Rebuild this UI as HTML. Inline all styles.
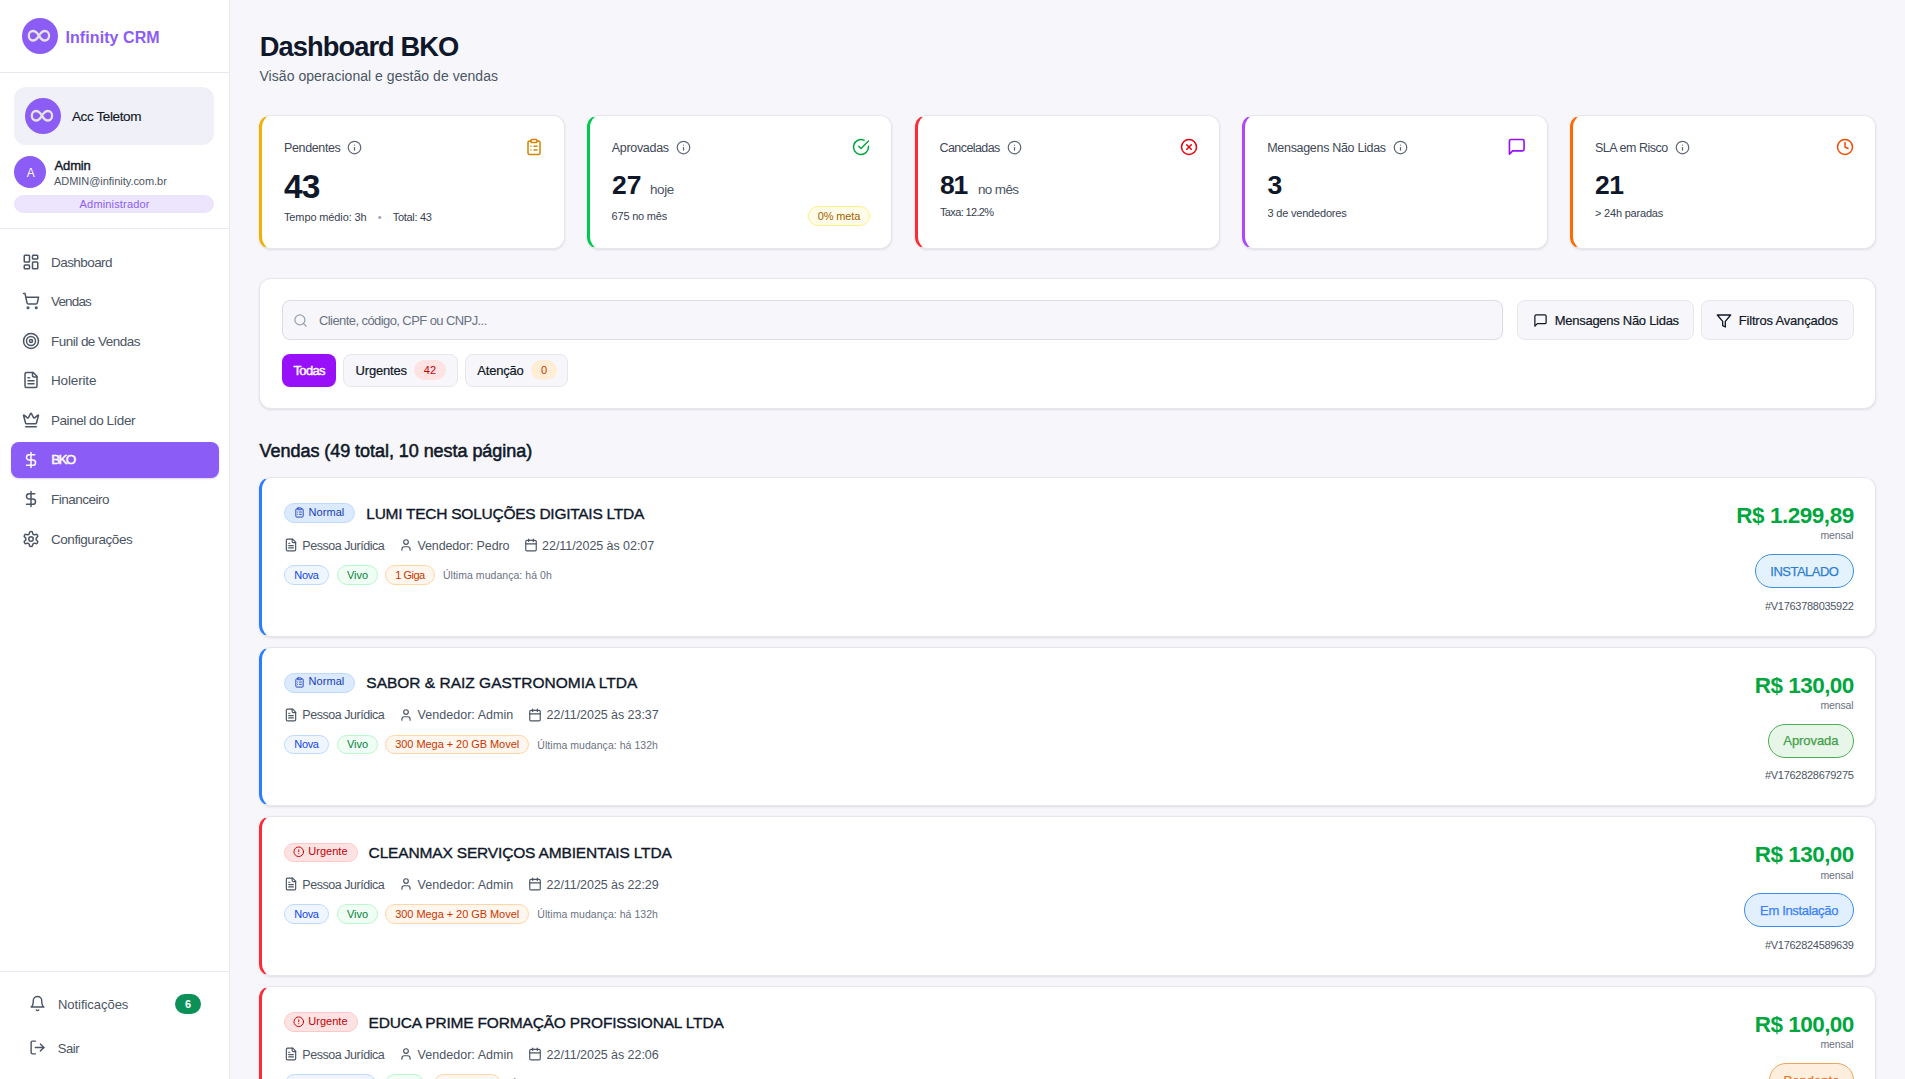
<!DOCTYPE html>
<html lang="pt-BR">
<head>
<meta charset="utf-8">
<title>Dashboard BKO - Infinity CRM</title>
<style>
*{box-sizing:border-box;margin:0;padding:0}
html,body{width:1905px;height:1079px;overflow:hidden}
body{font-family:"Liberation Sans",sans-serif;background:#f7f7fb;color:#111827;position:relative}
.a{position:absolute}
.t{white-space:pre}
svg.a{display:block;overflow:visible}
</style>
</head>
<body>
<div class="a" style="left:0px;top:0px;width:229px;height:1079px;background:#fff"></div>
<div class="a" style="left:229px;top:0px;width:1px;height:1079px;background:#e8e8f0"></div>
<div class="a" style="left:0px;top:72px;width:229px;height:1px;background:#e8e8f0"></div>
<div class="a" style="left:0px;top:228px;width:229px;height:1px;background:#e8e8f0"></div>
<div class="a" style="left:0px;top:971px;width:229px;height:1px;background:#e8e8f0"></div>
<div class="a" style="left:22px;top:18px;width:36px;height:36px;border-radius:50%;background:#8b5cf6"></div>
<svg class="a" style="left:27.35px;top:29.49px" width="23.9" height="13.62" viewBox="0 0 40 20" preserveAspectRatio="none"><path d="M20 10 C16 4 13 3 10 3 C6 3 3 6 3 10 C3 14 6 17 10 17 C13 17 16 16 20 10 C24 4 27 3 30 3 C34 3 37 6 37 10 C37 14 34 17 30 17 C27 17 24 16 20 10 Z" fill="none" stroke="#e6e4dc" stroke-width="3.8"/></svg>
<div class="a t" style="top:29.66px;font-size:16px;line-height:16px;color:#8b5cf6;font-weight:700;left:65.5px;letter-spacing:0.073px;">Infinity CRM</div>
<div class="a" style="left:14px;top:87px;width:200px;height:58px;border-radius:12px;background:#f0f0f8"></div>
<div class="a" style="left:25px;top:98px;width:36px;height:36px;border-radius:50%;background:#8b5cf6"></div>
<svg class="a" style="left:30.35px;top:109.49px" width="23.9" height="13.62" viewBox="0 0 40 20" preserveAspectRatio="none"><path d="M20 10 C16 4 13 3 10 3 C6 3 3 6 3 10 C3 14 6 17 10 17 C13 17 16 16 20 10 C24 4 27 3 30 3 C34 3 37 6 37 10 C37 14 34 17 30 17 C27 17 24 16 20 10 Z" fill="none" stroke="#e6e4dc" stroke-width="3.8"/></svg>
<div class="a t" style="top:109.87px;font-size:13.5px;line-height:13.5px;color:#111827;left:72px;-webkit-text-stroke:0.15px #111827;letter-spacing:-0.389px;">Acc Teletom</div>
<div class="a" style="left:14px;top:156px;width:32px;height:32px;border-radius:50%;background:#8b5cf6"></div>
<div class="a t" style="top:166.64px;font-size:12px;line-height:12px;color:#fff;left:-269.2px;width:600px;text-align:center;">A</div>
<div class="a t" style="top:159.30px;font-size:13px;line-height:13px;color:#111827;left:54.5px;-webkit-text-stroke:0.4px #111827;letter-spacing:-0.132px;">Admin</div>
<div class="a t" style="top:175.69px;font-size:11px;line-height:11px;color:#4b5563;left:54px;letter-spacing:-0.041px;">ADMIN@infinity.com.br</div>
<div class="a" style="left:14px;top:195px;width:200px;height:18px;border-radius:9px;background:#ede5fd"></div>
<div class="a t" style="top:198.69px;font-size:11px;line-height:11px;color:#8b5cf6;left:-185.4px;width:600px;text-align:center;letter-spacing:0.165px;">Administrador</div>
<svg class="a" style="left:22.00px;top:253.10px;" width="18" height="18" viewBox="0 0 24 24" fill="none" stroke="#4b5563" stroke-width="2" stroke-linecap="round" stroke-linejoin="round"><rect width="7" height="9" x="3" y="3" rx="1"/><rect width="7" height="5" x="14" y="3" rx="1"/><rect width="7" height="9" x="14" y="12" rx="1"/><rect width="7" height="5" x="3" y="16" rx="1"/></svg>
<div class="a t" style="top:255.87px;font-size:13.5px;line-height:13.5px;color:#4b5563;left:51px;letter-spacing:-0.561px;">Dashboard</div>
<svg class="a" style="left:22.00px;top:292.20px;" width="18" height="18" viewBox="0 0 24 24" fill="none" stroke="#4b5563" stroke-width="2" stroke-linecap="round" stroke-linejoin="round"><circle cx="8" cy="21" r="1"/><circle cx="19" cy="21" r="1"/><path d="M2.05 2.05h2l2.66 12.42a2 2 0 0 0 2 1.58h9.78a2 2 0 0 0 1.95-1.57l1.65-7.43H5.12"/></svg>
<div class="a t" style="top:294.97px;font-size:13.5px;line-height:13.5px;color:#4b5563;left:51px;letter-spacing:-0.841px;">Vendas</div>
<svg class="a" style="left:22.00px;top:332.00px;" width="18" height="18" viewBox="0 0 24 24" fill="none" stroke="#4b5563" stroke-width="2" stroke-linecap="round" stroke-linejoin="round"><circle cx="12" cy="12" r="10"/><circle cx="12" cy="12" r="6"/><circle cx="12" cy="12" r="2"/></svg>
<div class="a t" style="top:334.77px;font-size:13.5px;line-height:13.5px;color:#4b5563;left:51px;letter-spacing:-0.522px;">Funil de Vendas</div>
<svg class="a" style="left:22.00px;top:371.10px;" width="18" height="18" viewBox="0 0 24 24" fill="none" stroke="#4b5563" stroke-width="2" stroke-linecap="round" stroke-linejoin="round"><path d="M15 2H6a2 2 0 0 0-2 2v16a2 2 0 0 0 2 2h12a2 2 0 0 0 2-2V7Z"/><path d="M14 2v4a2 2 0 0 0 2 2h4"/><path d="M10 9H8"/><path d="M16 13H8"/><path d="M16 17H8"/></svg>
<div class="a t" style="top:373.87px;font-size:13.5px;line-height:13.5px;color:#4b5563;left:51px;letter-spacing:-0.154px;">Holerite</div>
<svg class="a" style="left:22.00px;top:410.80px;" width="18" height="18" viewBox="0 0 24 24" fill="none" stroke="#4b5563" stroke-width="2" stroke-linecap="round" stroke-linejoin="round"><path d="M11.562 3.266a.5.5 0 0 1 .876 0L15.39 8.87a1 1 0 0 0 1.516.294L21.183 5.5a.5.5 0 0 1 .798.519l-2.834 10.246a1 1 0 0 1-.956.734H5.81a1 1 0 0 1-.957-.734L2.02 6.02a.5.5 0 0 1 .798-.519l4.276 3.664a1 1 0 0 0 1.516-.294z"/><path d="M5 21h14"/></svg>
<div class="a t" style="top:413.57px;font-size:13.5px;line-height:13.5px;color:#4b5563;left:51px;letter-spacing:-0.455px;">Painel do Líder</div>
<div class="a" style="left:11px;top:442px;width:208px;height:35.6px;border-radius:8px;background:#8b5cf6;box-shadow:0 1px 2px rgba(139,92,246,.3)"></div>
<svg class="a" style="left:22.00px;top:450.60px;" width="18" height="18" viewBox="0 0 24 24" fill="none" stroke="#fff" stroke-width="2" stroke-linecap="round" stroke-linejoin="round"><line x1="12" x2="12" y1="2" y2="22"/><path d="M17 5H9.5a3.5 3.5 0 0 0 0 7h5a3.5 3.5 0 0 1 0 7H6"/></svg>
<div class="a t" style="top:453.37px;font-size:13.5px;line-height:13.5px;color:#fff;left:51.2px;-webkit-text-stroke:0.45px #fff;letter-spacing:-1.739px;">BKO</div>
<svg class="a" style="left:22.00px;top:490.00px;" width="18" height="18" viewBox="0 0 24 24" fill="none" stroke="#4b5563" stroke-width="2" stroke-linecap="round" stroke-linejoin="round"><line x1="12" x2="12" y1="2" y2="22"/><path d="M17 5H9.5a3.5 3.5 0 0 0 0 7h5a3.5 3.5 0 0 1 0 7H6"/></svg>
<div class="a t" style="top:492.77px;font-size:13.5px;line-height:13.5px;color:#4b5563;left:51px;letter-spacing:-0.503px;">Financeiro</div>
<svg class="a" style="left:22.00px;top:529.80px;" width="18" height="18" viewBox="0 0 24 24" fill="none" stroke="#4b5563" stroke-width="2" stroke-linecap="round" stroke-linejoin="round"><path d="M12.22 2h-.44a2 2 0 0 0-2 2v.18a2 2 0 0 1-1 1.73l-.43.25a2 2 0 0 1-2 0l-.15-.08a2 2 0 0 0-2.73.73l-.22.38a2 2 0 0 0 .73 2.73l.15.1a2 2 0 0 1 1 1.72v.51a2 2 0 0 1-1 1.74l-.15.09a2 2 0 0 0-.73 2.73l.22.38a2 2 0 0 0 2.73.73l.15-.08a2 2 0 0 1 2 0l.43.25a2 2 0 0 1 1 1.73V20a2 2 0 0 0 2 2h.44a2 2 0 0 0 2-2v-.18a2 2 0 0 1 1-1.73l.43-.25a2 2 0 0 1 2 0l.15.08a2 2 0 0 0 2.73-.73l.22-.39a2 2 0 0 0-.73-2.73l-.15-.08a2 2 0 0 1-1-1.74v-.5a2 2 0 0 1 1-1.74l.15-.09a2 2 0 0 0 .73-2.73l-.22-.38a2 2 0 0 0-2.73-.73l-.15.08a2 2 0 0 1-2 0l-.43-.25a2 2 0 0 1-1-1.73V4a2 2 0 0 0-2-2z"/><circle cx="12" cy="12" r="3"/></svg>
<div class="a t" style="top:532.57px;font-size:13.5px;line-height:13.5px;color:#4b5563;left:51px;letter-spacing:-0.443px;">Configurações</div>
<svg class="a" style="left:29.30px;top:995.40px;" width="17" height="17" viewBox="0 0 24 24" fill="none" stroke="#4b5563" stroke-width="2" stroke-linecap="round" stroke-linejoin="round"><path d="M6 8a6 6 0 0 1 12 0c0 7 3 9 3 9H3s3-2 3-9"/><path d="M10.3 21a1.94 1.94 0 0 0 3.4 0"/></svg>
<div class="a t" style="top:997.60px;font-size:13px;line-height:13px;color:#4b5563;left:58px;letter-spacing:-0.043px;">Notificações</div>
<div class="a" style="left:175px;top:994px;width:26px;height:20px;border-radius:10px;background:#0b9157"></div>
<div class="a t" style="top:998.89px;font-size:11px;line-height:11px;color:#fff;font-weight:700;left:-112px;width:600px;text-align:center;">6</div>
<svg class="a" style="left:29.40px;top:1039.10px;" width="17" height="17" viewBox="0 0 24 24" fill="none" stroke="#4b5563" stroke-width="2" stroke-linecap="round" stroke-linejoin="round"><path d="M9 21H5a2 2 0 0 1-2-2V5a2 2 0 0 1 2-2h4"/><polyline points="16 17 21 12 16 7"/><line x1="21" x2="9" y1="12" y2="12"/></svg>
<div class="a t" style="top:1042.00px;font-size:13px;line-height:13px;color:#4b5563;left:57.7px;letter-spacing:-0.431px;">Sair</div>
<div class="a t" style="top:32.99px;font-size:27.3px;line-height:27.3px;color:#0f172a;font-weight:700;left:259.8px;letter-spacing:-0.948px;">Dashboard BKO</div>
<div class="a t" style="top:68.95px;font-size:14px;line-height:14px;color:#4b5563;left:259.5px;letter-spacing:0.038px;">Visão operacional e gestão de vendas</div>
<div class="a" style="left:259.0px;top:115px;width:305.5px;height:134px;background:#fff;border:1px solid #e6e7ec;border-radius:12px;box-shadow:0 1px 3px rgba(15,23,42,.08),0 1px 2px rgba(15,23,42,.04);border-left:3px solid #f0b100;"></div>
<div class="a t" style="top:141.72px;font-size:12.5px;line-height:12.5px;color:#404856;left:284.0px;letter-spacing:-0.365px;">Pendentes</div>
<svg class="a" style="left:346.80px;top:139.90px;" width="15" height="15" viewBox="0 0 24 24" fill="none" stroke="#5f6775" stroke-width="2" stroke-linecap="round" stroke-linejoin="round"><circle cx="12" cy="12" r="10"/><path d="M12 16v-4"/><path d="M12 8h.01"/></svg>
<svg class="a" style="left:525.20px;top:138.00px;" width="18" height="18" viewBox="0 0 24 24" fill="none" stroke="#d08700" stroke-width="2" stroke-linecap="round" stroke-linejoin="round"><rect width="8" height="4" x="8" y="2" rx="1" ry="1"/><path d="M16 4h2a2 2 0 0 1 2 2v14a2 2 0 0 1-2 2H6a2 2 0 0 1-2-2V6a2 2 0 0 1 2-2h2"/><path d="M12 11h4"/><path d="M12 16h4"/><path d="M8 11h.01"/><path d="M8 16h.01"/></svg>
<div class="a" style="left:586.75px;top:115px;width:305.5px;height:134px;background:#fff;border:1px solid #e6e7ec;border-radius:12px;box-shadow:0 1px 3px rgba(15,23,42,.08),0 1px 2px rgba(15,23,42,.04);border-left:3px solid #00c950;"></div>
<div class="a t" style="top:141.72px;font-size:12.5px;line-height:12.5px;color:#404856;left:611.75px;letter-spacing:-0.307px;">Aprovadas</div>
<svg class="a" style="left:675.70px;top:139.90px;" width="15" height="15" viewBox="0 0 24 24" fill="none" stroke="#5f6775" stroke-width="2" stroke-linecap="round" stroke-linejoin="round"><circle cx="12" cy="12" r="10"/><path d="M12 16v-4"/><path d="M12 8h.01"/></svg>
<svg class="a" style="left:852.00px;top:138.00px;" width="18" height="18" viewBox="0 0 24 24" fill="none" stroke="#00a63e" stroke-width="2" stroke-linecap="round" stroke-linejoin="round"><path d="M22 11.08V12a10 10 0 1 1-5.93-9.14"/><polyline points="22 4 12 14.01 9 11.01"/></svg>
<div class="a" style="left:914.5px;top:115px;width:305.5px;height:134px;background:#fff;border:1px solid #e6e7ec;border-radius:12px;box-shadow:0 1px 3px rgba(15,23,42,.08),0 1px 2px rgba(15,23,42,.04);border-left:3px solid #fb2c36;"></div>
<div class="a t" style="top:141.72px;font-size:12.5px;line-height:12.5px;color:#404856;left:939.5px;letter-spacing:-0.572px;">Canceladas</div>
<svg class="a" style="left:1006.70px;top:139.90px;" width="15" height="15" viewBox="0 0 24 24" fill="none" stroke="#5f6775" stroke-width="2" stroke-linecap="round" stroke-linejoin="round"><circle cx="12" cy="12" r="10"/><path d="M12 16v-4"/><path d="M12 8h.01"/></svg>
<svg class="a" style="left:1179.80px;top:138.00px;" width="18" height="18" viewBox="0 0 24 24" fill="none" stroke="#e7000b" stroke-width="2" stroke-linecap="round" stroke-linejoin="round"><circle cx="12" cy="12" r="10"/><path d="m15 9-6 6"/><path d="m9 9 6 6"/></svg>
<div class="a" style="left:1242.25px;top:115px;width:305.5px;height:134px;background:#fff;border:1px solid #e6e7ec;border-radius:12px;box-shadow:0 1px 3px rgba(15,23,42,.08),0 1px 2px rgba(15,23,42,.04);border-left:3px solid #ad46ff;"></div>
<div class="a t" style="top:141.72px;font-size:12.5px;line-height:12.5px;color:#404856;left:1267.25px;letter-spacing:-0.310px;">Mensagens Não Lidas</div>
<svg class="a" style="left:1392.50px;top:139.90px;" width="15" height="15" viewBox="0 0 24 24" fill="none" stroke="#5f6775" stroke-width="2" stroke-linecap="round" stroke-linejoin="round"><circle cx="12" cy="12" r="10"/><path d="M12 16v-4"/><path d="M12 8h.01"/></svg>
<svg class="a" style="left:1507.25px;top:137.25px;" width="19.5" height="19.5" viewBox="0 0 24 24" fill="none" stroke="#9810fa" stroke-width="2" stroke-linecap="round" stroke-linejoin="round"><path d="M21 15a2 2 0 0 1-2 2H7l-4 4V5a2 2 0 0 1 2-2h14a2 2 0 0 1 2 2z"/></svg>
<div class="a" style="left:1570.0px;top:115px;width:305.5px;height:134px;background:#fff;border:1px solid #e6e7ec;border-radius:12px;box-shadow:0 1px 3px rgba(15,23,42,.08),0 1px 2px rgba(15,23,42,.04);border-left:3px solid #ff6900;"></div>
<div class="a t" style="top:141.72px;font-size:12.5px;line-height:12.5px;color:#404856;left:1595.0px;letter-spacing:-0.476px;">SLA em Risco</div>
<svg class="a" style="left:1674.50px;top:139.90px;" width="15" height="15" viewBox="0 0 24 24" fill="none" stroke="#5f6775" stroke-width="2" stroke-linecap="round" stroke-linejoin="round"><circle cx="12" cy="12" r="10"/><path d="M12 16v-4"/><path d="M12 8h.01"/></svg>
<svg class="a" style="left:1836.00px;top:138.00px;" width="18" height="18" viewBox="0 0 24 24" fill="none" stroke="#f54900" stroke-width="2" stroke-linecap="round" stroke-linejoin="round"><circle cx="12" cy="12" r="10"/><polyline points="12 6 12 12 16 14"/></svg>
<div class="a t" style="top:169.84px;font-size:33.5px;line-height:33.5px;color:#0f172a;font-weight:700;left:284px;letter-spacing:-0.883px;">43</div>
<div class="a t" style="top:211.69px;font-size:11px;line-height:11px;color:#374151;left:284px;letter-spacing:-0.126px;">Tempo médio: 3h</div>
<div class="a t" style="top:211.69px;font-size:11px;line-height:11px;color:#9ca3af;left:79.60000000000002px;width:600px;text-align:center;">•</div>
<div class="a t" style="top:211.69px;font-size:11px;line-height:11px;color:#374151;left:392.8px;letter-spacing:-0.310px;">Total: 43</div>
<div class="a t" style="top:171.77px;font-size:26.5px;line-height:26.5px;color:#0f172a;font-weight:700;left:612px;letter-spacing:-0.092px;">27</div>
<div class="a t" style="top:182.57px;font-size:13.5px;line-height:13.5px;color:#4b5563;left:650px;letter-spacing:-0.433px;">hoje</div>
<div class="a t" style="top:210.69px;font-size:11px;line-height:11px;color:#374151;left:611.6px;letter-spacing:-0.208px;">675 no mês</div>
<div class="a" style="left:808px;top:206px;width:62px;height:19.6px;background:#fefce8;border:1px solid #fff085;border-radius:10px"></div>
<div class="a t" style="top:210.69px;font-size:11px;line-height:11px;color:#a65f00;left:539px;width:600px;text-align:center;letter-spacing:-0.132px;">0% meta</div>
<div class="a t" style="top:171.77px;font-size:26.5px;line-height:26.5px;color:#0f172a;font-weight:700;left:940px;letter-spacing:-1.242px;">81</div>
<div class="a t" style="top:182.57px;font-size:13.5px;line-height:13.5px;color:#4b5563;left:978px;letter-spacing:-0.647px;">no mês</div>
<div class="a t" style="top:207.39px;font-size:11px;line-height:11px;color:#374151;left:940px;letter-spacing:-0.641px;">Taxa: 12.2%</div>
<div class="a t" style="top:171.77px;font-size:26.5px;line-height:26.5px;color:#0f172a;font-weight:700;left:1267.5px;letter-spacing:-0.750px;">3</div>
<div class="a t" style="top:207.69px;font-size:11px;line-height:11px;color:#374151;left:1267.5px;letter-spacing:-0.197px;">3 de vendedores</div>
<div class="a t" style="top:171.77px;font-size:26.5px;line-height:26.5px;color:#0f172a;font-weight:700;left:1595px;letter-spacing:-0.542px;">21</div>
<div class="a t" style="top:208.09px;font-size:11px;line-height:11px;color:#374151;left:1595px;letter-spacing:-0.203px;">&gt; 24h paradas</div>
<div class="a" style="left:259px;top:278px;width:1617px;height:131px;background:#fff;border:1px solid #e6e7ec;border-radius:12px;box-shadow:0 1px 3px rgba(15,23,42,.08),0 1px 2px rgba(15,23,42,.04);"></div>
<div class="a" style="left:282px;top:300px;width:1220.5px;height:39.5px;background:#f7f7fb;border:1px solid #d9dce3;border-radius:8px"></div>
<svg class="a" style="left:292.60px;top:312.50px;" width="15" height="15" viewBox="0 0 24 24" fill="none" stroke="#99a1af" stroke-width="2" stroke-linecap="round" stroke-linejoin="round"><circle cx="11" cy="11" r="8"/><path d="m21 21-4.3-4.3"/></svg>
<div class="a t" style="top:314.10px;font-size:13px;line-height:13px;color:#6a7282;left:319px;letter-spacing:-0.581px;">Cliente, código, CPF ou CNPJ...</div>
<div class="a" style="left:1517px;top:300px;width:176.5px;height:39.5px;background:#f7f7fb;border:1px solid #e5e7eb;border-radius:8px"></div>
<svg class="a" style="left:1532.70px;top:313.10px;" width="15" height="15" viewBox="0 0 24 24" fill="none" stroke="#111827" stroke-width="2" stroke-linecap="round" stroke-linejoin="round"><path d="M21 15a2 2 0 0 1-2 2H7l-4 4V5a2 2 0 0 1 2-2h14a2 2 0 0 1 2 2z"/></svg>
<div class="a t" style="top:314.30px;font-size:13px;line-height:13px;color:#111827;left:1554.8px;-webkit-text-stroke:0.2px #111827;letter-spacing:-0.282px;">Mensagens Não Lidas</div>
<div class="a" style="left:1701.3px;top:300px;width:152.5px;height:39.5px;background:#f7f7fb;border:1px solid #e5e7eb;border-radius:8px"></div>
<svg class="a" style="left:1716.30px;top:312.50px;" width="16" height="16" viewBox="0 0 24 24" fill="none" stroke="#111827" stroke-width="2" stroke-linecap="round" stroke-linejoin="round"><polygon points="22 3 2 3 10 12.46 10 19 14 21 14 12.46 22 3"/></svg>
<div class="a t" style="top:314.30px;font-size:13px;line-height:13px;color:#111827;left:1738.8px;-webkit-text-stroke:0.2px #111827;letter-spacing:-0.193px;">Filtros Avançados</div>
<div class="a" style="left:282px;top:354px;width:54px;height:32.5px;background:#9810fa;border-radius:8px"></div>
<div class="a t" style="top:364.10px;font-size:13px;line-height:13px;color:#fff;left:9.199999999999989px;width:600px;text-align:center;-webkit-text-stroke:0.45px #fff;letter-spacing:-0.641px;">Todas</div>
<div class="a" style="left:343.3px;top:354px;width:114.3px;height:32.5px;background:#f7f7fb;border:1px solid #e5e7eb;border-radius:8px"></div>
<div class="a t" style="top:364.10px;font-size:13px;line-height:13px;color:#111827;left:355.6px;-webkit-text-stroke:0.2px #111827;letter-spacing:-0.194px;">Urgentes</div>
<div class="a" style="left:414px;top:360px;width:31.7px;height:20px;background:#ffe2e2;border-radius:10px"></div>
<div class="a t" style="top:364.69px;font-size:11px;line-height:11px;color:#c10007;left:129.89999999999998px;width:600px;text-align:center;">42</div>
<div class="a" style="left:465.3px;top:354px;width:103px;height:32.5px;background:#f7f7fb;border:1px solid #e5e7eb;border-radius:8px"></div>
<div class="a t" style="top:364.10px;font-size:13px;line-height:13px;color:#111827;left:477.3px;-webkit-text-stroke:0.2px #111827;letter-spacing:-0.200px;">Atenção</div>
<div class="a" style="left:531px;top:360px;width:26px;height:20px;background:#ffedd5;border-radius:10px"></div>
<div class="a t" style="top:364.69px;font-size:11px;line-height:11px;color:#ca3500;left:244px;width:600px;text-align:center;">0</div>
<div class="a t" style="top:441.76px;font-size:18px;line-height:18px;color:#111827;left:259.6px;-webkit-text-stroke:0.55px #111827;letter-spacing:-0.050px;">Vendas (49 total, 10 nesta página)</div>
<div class="a" style="left:259px;top:477px;width:1617px;height:159.67px;background:#fff;border:1px solid #e6e7ec;border-radius:12px;box-shadow:0 1px 3px rgba(15,23,42,.08),0 1px 2px rgba(15,23,42,.04);border-left:3px solid #2b7fff;"></div>
<div class="a" style="left:284px;top:503.2px;width:71px;height:19.7px;background:#dbeafe;border:1px solid #bedbff;border-radius:10px"></div>
<svg class="a" style="left:293.80px;top:507.00px;" width="11" height="11" viewBox="0 0 24 24" fill="none" stroke="#193cb8" stroke-width="2" stroke-linecap="round" stroke-linejoin="round"><rect width="8" height="4" x="8" y="2" rx="1" ry="1"/><path d="M16 4h2a2 2 0 0 1 2 2v14a2 2 0 0 1-2 2H6a2 2 0 0 1-2-2V6a2 2 0 0 1 2-2h2"/><path d="M12 11h4"/><path d="M12 16h4"/><path d="M8 11h.01"/><path d="M8 16h.01"/></svg>
<div class="a t" style="top:506.69px;font-size:11px;line-height:11px;color:#193cb8;left:308.6px;letter-spacing:0.041px;">Normal</div>
<div class="a t" style="top:505.58px;font-size:15.5px;line-height:15.5px;color:#0f172a;left:366.3px;-webkit-text-stroke:0.35px #0f172a;letter-spacing:-0.258px;">LUMI TECH SOLUÇÕES DIGITAIS LTDA</div>
<svg class="a" style="left:284.30px;top:538.00px;" width="14" height="14" viewBox="0 0 24 24" fill="none" stroke="#4b5563" stroke-width="2" stroke-linecap="round" stroke-linejoin="round"><path d="M15 2H6a2 2 0 0 0-2 2v16a2 2 0 0 0 2 2h12a2 2 0 0 0 2-2V7Z"/><path d="M14 2v4a2 2 0 0 0 2 2h4"/><path d="M10 9H8"/><path d="M16 13H8"/><path d="M16 17H8"/></svg>
<div class="a t" style="top:539.62px;font-size:12.5px;line-height:12.5px;color:#4b5563;left:302.3px;letter-spacing:-0.463px;">Pessoa Jurídica</div>
<svg class="a" style="left:399.20px;top:538.00px;" width="14" height="14" viewBox="0 0 24 24" fill="none" stroke="#4b5563" stroke-width="2" stroke-linecap="round" stroke-linejoin="round"><path d="M19 21v-2a4 4 0 0 0-4-4H9a4 4 0 0 0-4 4v2"/><circle cx="12" cy="7" r="4"/></svg>
<div class="a t" style="top:539.62px;font-size:12.5px;line-height:12.5px;color:#4b5563;left:417.5px;letter-spacing:-0.135px;">Vendedor: Pedro</div>
<svg class="a" style="left:524.20px;top:538.00px;" width="14" height="14" viewBox="0 0 24 24" fill="none" stroke="#4b5563" stroke-width="2" stroke-linecap="round" stroke-linejoin="round"><rect width="18" height="18" x="3" y="4" rx="2" ry="2"/><line x1="16" x2="16" y1="2" y2="6"/><line x1="8" x2="8" y1="2" y2="6"/><line x1="3" x2="21" y1="10" y2="10"/></svg>
<div class="a t" style="top:539.62px;font-size:12.5px;line-height:12.5px;color:#4b5563;left:542.1px;letter-spacing:-0.056px;">22/11/2025 às 02:07</div>
<div class="a" style="left:284.2px;top:565px;width:44.6px;height:19.7px;background:#eff6ff;border:1px solid #bedbff;border-radius:10px"></div>
<div class="a t" style="top:569.69px;font-size:11px;line-height:11px;color:#1447e6;left:6.5px;width:600px;text-align:center;letter-spacing:-0.347px;">Nova</div>
<div class="a" style="left:337.2px;top:565px;width:40.6px;height:19.7px;background:#f0fdf4;border:1px solid #b9f8cf;border-radius:10px"></div>
<div class="a t" style="top:569.69px;font-size:11px;line-height:11px;color:#008236;left:57.5px;width:600px;text-align:center;letter-spacing:-0.051px;">Vivo</div>
<div class="a" style="left:385px;top:565px;width:49.9px;height:19.7px;background:#fff7ed;border:1px solid #ffd6a7;border-radius:10px"></div>
<div class="a t" style="top:569.69px;font-size:11px;line-height:11px;color:#ca3500;left:109.94999999999999px;width:600px;text-align:center;letter-spacing:-0.504px;">1 Giga</div>
<div class="a t" style="top:570.11px;font-size:10.5px;line-height:10.5px;color:#6a7282;left:442.9px;letter-spacing:0.044px;">Última mudança: há 0h</div>
<div class="a t" style="top:504.95px;font-size:22.5px;line-height:22.5px;color:#00a63e;font-weight:700;right:51.700000000000045px;letter-spacing:-0.464px;margin-right:-0.464px;">R$ 1.299,89</div>
<div class="a t" style="top:530.31px;font-size:10.5px;line-height:10.5px;color:#6a7282;right:51.700000000000045px;letter-spacing:-0.143px;margin-right:-0.143px;">mensal</div>
<div class="a" style="left:1755px;top:554px;width:98.7px;height:34px;background:#e3f2fd;border:1px solid #3d8fdc;border-radius:17px"></div>
<div class="a t" style="top:564.80px;font-size:13px;line-height:13px;color:#2f7fd0;left:1504.35px;width:600px;text-align:center;-webkit-text-stroke:0.25px #2f7fd0;letter-spacing:-0.524px;">INSTALADO</div>
<div class="a t" style="top:600.69px;font-size:11px;line-height:11px;color:#4b5563;right:51.700000000000045px;letter-spacing:-0.292px;margin-right:-0.292px;">#V1763788035922</div>
<div class="a" style="left:259px;top:646.67px;width:1617px;height:159.67px;background:#fff;border:1px solid #e6e7ec;border-radius:12px;box-shadow:0 1px 3px rgba(15,23,42,.08),0 1px 2px rgba(15,23,42,.04);border-left:3px solid #2b7fff;"></div>
<div class="a" style="left:284px;top:672.8699999999999px;width:71px;height:19.7px;background:#dbeafe;border:1px solid #bedbff;border-radius:10px"></div>
<svg class="a" style="left:293.80px;top:676.67px;" width="11" height="11" viewBox="0 0 24 24" fill="none" stroke="#193cb8" stroke-width="2" stroke-linecap="round" stroke-linejoin="round"><rect width="8" height="4" x="8" y="2" rx="1" ry="1"/><path d="M16 4h2a2 2 0 0 1 2 2v14a2 2 0 0 1-2 2H6a2 2 0 0 1-2-2V6a2 2 0 0 1 2-2h2"/><path d="M12 11h4"/><path d="M12 16h4"/><path d="M8 11h.01"/><path d="M8 16h.01"/></svg>
<div class="a t" style="top:676.36px;font-size:11px;line-height:11px;color:#193cb8;left:308.6px;letter-spacing:0.041px;">Normal</div>
<div class="a t" style="top:675.25px;font-size:15.5px;line-height:15.5px;color:#0f172a;left:366.3px;-webkit-text-stroke:0.35px #0f172a;letter-spacing:-0.001px;">SABOR &amp; RAIZ GASTRONOMIA LTDA</div>
<svg class="a" style="left:284.30px;top:707.67px;" width="14" height="14" viewBox="0 0 24 24" fill="none" stroke="#4b5563" stroke-width="2" stroke-linecap="round" stroke-linejoin="round"><path d="M15 2H6a2 2 0 0 0-2 2v16a2 2 0 0 0 2 2h12a2 2 0 0 0 2-2V7Z"/><path d="M14 2v4a2 2 0 0 0 2 2h4"/><path d="M10 9H8"/><path d="M16 13H8"/><path d="M16 17H8"/></svg>
<div class="a t" style="top:709.29px;font-size:12.5px;line-height:12.5px;color:#4b5563;left:302.3px;letter-spacing:-0.463px;">Pessoa Jurídica</div>
<svg class="a" style="left:399.20px;top:707.67px;" width="14" height="14" viewBox="0 0 24 24" fill="none" stroke="#4b5563" stroke-width="2" stroke-linecap="round" stroke-linejoin="round"><path d="M19 21v-2a4 4 0 0 0-4-4H9a4 4 0 0 0-4 4v2"/><circle cx="12" cy="7" r="4"/></svg>
<div class="a t" style="top:709.29px;font-size:12.5px;line-height:12.5px;color:#4b5563;left:417.5px;letter-spacing:0.039px;">Vendedor: Admin</div>
<svg class="a" style="left:528.30px;top:707.67px;" width="14" height="14" viewBox="0 0 24 24" fill="none" stroke="#4b5563" stroke-width="2" stroke-linecap="round" stroke-linejoin="round"><rect width="18" height="18" x="3" y="4" rx="2" ry="2"/><line x1="16" x2="16" y1="2" y2="6"/><line x1="8" x2="8" y1="2" y2="6"/><line x1="3" x2="21" y1="10" y2="10"/></svg>
<div class="a t" style="top:709.29px;font-size:12.5px;line-height:12.5px;color:#4b5563;left:546.6px;letter-spacing:-0.056px;">22/11/2025 às 23:37</div>
<div class="a" style="left:284.2px;top:734.67px;width:44.6px;height:19.7px;background:#eff6ff;border:1px solid #bedbff;border-radius:10px"></div>
<div class="a t" style="top:739.36px;font-size:11px;line-height:11px;color:#1447e6;left:6.5px;width:600px;text-align:center;letter-spacing:-0.347px;">Nova</div>
<div class="a" style="left:337.2px;top:734.67px;width:40.6px;height:19.7px;background:#f0fdf4;border:1px solid #b9f8cf;border-radius:10px"></div>
<div class="a t" style="top:739.36px;font-size:11px;line-height:11px;color:#008236;left:57.5px;width:600px;text-align:center;letter-spacing:-0.051px;">Vivo</div>
<div class="a" style="left:385px;top:734.67px;width:144.3px;height:19.7px;background:#fff7ed;border:1px solid #ffd6a7;border-radius:10px"></div>
<div class="a t" style="top:739.36px;font-size:11px;line-height:11px;color:#ca3500;left:157.14999999999998px;width:600px;text-align:center;letter-spacing:-0.052px;">300 Mega + 20 GB Movel</div>
<div class="a t" style="top:739.78px;font-size:10.5px;line-height:10.5px;color:#6a7282;left:537.3px;letter-spacing:0.045px;">Última mudança: há 132h</div>
<div class="a t" style="top:674.62px;font-size:22.5px;line-height:22.5px;color:#00a63e;font-weight:700;right:51.700000000000045px;letter-spacing:-0.527px;margin-right:-0.527px;">R$ 130,00</div>
<div class="a t" style="top:699.98px;font-size:10.5px;line-height:10.5px;color:#6a7282;right:51.700000000000045px;letter-spacing:-0.143px;margin-right:-0.143px;">mensal</div>
<div class="a" style="left:1768px;top:723.67px;width:85.7px;height:34px;background:#e8f5e9;border:1px solid #4caf50;border-radius:17px"></div>
<div class="a t" style="top:734.47px;font-size:13px;line-height:13px;color:#43a047;left:1510.85px;width:600px;text-align:center;-webkit-text-stroke:0.25px #43a047;letter-spacing:-0.082px;">Aprovada</div>
<div class="a t" style="top:770.36px;font-size:11px;line-height:11px;color:#4b5563;right:51.700000000000045px;letter-spacing:-0.292px;margin-right:-0.292px;">#V1762828679275</div>
<div class="a" style="left:259px;top:816.33px;width:1617px;height:159.67px;background:#fff;border:1px solid #e6e7ec;border-radius:12px;box-shadow:0 1px 3px rgba(15,23,42,.08),0 1px 2px rgba(15,23,42,.04);border-left:3px solid #fb2c36;"></div>
<div class="a" style="left:284px;top:842.53px;width:73.5px;height:19.7px;background:#ffe2e2;border:1px solid #ffc9c9;border-radius:10px"></div>
<svg class="a" style="left:293.45px;top:846.08px;" width="11.5" height="11.5" viewBox="0 0 24 24" fill="none" stroke="#c10007" stroke-width="2" stroke-linecap="round" stroke-linejoin="round"><circle cx="12" cy="12" r="10"/><line x1="12" x2="12" y1="8" y2="12"/><line x1="12" x2="12.01" y1="16" y2="16"/></svg>
<div class="a t" style="top:846.02px;font-size:11px;line-height:11px;color:#c10007;left:308.3px;letter-spacing:0.023px;">Urgente</div>
<div class="a t" style="top:844.91px;font-size:15.5px;line-height:15.5px;color:#0f172a;left:368.6px;-webkit-text-stroke:0.35px #0f172a;letter-spacing:-0.162px;">CLEANMAX SERVIÇOS AMBIENTAIS LTDA</div>
<svg class="a" style="left:284.30px;top:877.33px;" width="14" height="14" viewBox="0 0 24 24" fill="none" stroke="#4b5563" stroke-width="2" stroke-linecap="round" stroke-linejoin="round"><path d="M15 2H6a2 2 0 0 0-2 2v16a2 2 0 0 0 2 2h12a2 2 0 0 0 2-2V7Z"/><path d="M14 2v4a2 2 0 0 0 2 2h4"/><path d="M10 9H8"/><path d="M16 13H8"/><path d="M16 17H8"/></svg>
<div class="a t" style="top:878.95px;font-size:12.5px;line-height:12.5px;color:#4b5563;left:302.3px;letter-spacing:-0.463px;">Pessoa Jurídica</div>
<svg class="a" style="left:399.20px;top:877.33px;" width="14" height="14" viewBox="0 0 24 24" fill="none" stroke="#4b5563" stroke-width="2" stroke-linecap="round" stroke-linejoin="round"><path d="M19 21v-2a4 4 0 0 0-4-4H9a4 4 0 0 0-4 4v2"/><circle cx="12" cy="7" r="4"/></svg>
<div class="a t" style="top:878.95px;font-size:12.5px;line-height:12.5px;color:#4b5563;left:417.5px;letter-spacing:0.039px;">Vendedor: Admin</div>
<svg class="a" style="left:528.30px;top:877.33px;" width="14" height="14" viewBox="0 0 24 24" fill="none" stroke="#4b5563" stroke-width="2" stroke-linecap="round" stroke-linejoin="round"><rect width="18" height="18" x="3" y="4" rx="2" ry="2"/><line x1="16" x2="16" y1="2" y2="6"/><line x1="8" x2="8" y1="2" y2="6"/><line x1="3" x2="21" y1="10" y2="10"/></svg>
<div class="a t" style="top:878.95px;font-size:12.5px;line-height:12.5px;color:#4b5563;left:546.6px;letter-spacing:-0.056px;">22/11/2025 às 22:29</div>
<div class="a" style="left:284.2px;top:904.33px;width:44.6px;height:19.7px;background:#eff6ff;border:1px solid #bedbff;border-radius:10px"></div>
<div class="a t" style="top:909.02px;font-size:11px;line-height:11px;color:#1447e6;left:6.5px;width:600px;text-align:center;letter-spacing:-0.347px;">Nova</div>
<div class="a" style="left:337.2px;top:904.33px;width:40.6px;height:19.7px;background:#f0fdf4;border:1px solid #b9f8cf;border-radius:10px"></div>
<div class="a t" style="top:909.02px;font-size:11px;line-height:11px;color:#008236;left:57.5px;width:600px;text-align:center;letter-spacing:-0.051px;">Vivo</div>
<div class="a" style="left:385px;top:904.33px;width:144.3px;height:19.7px;background:#fff7ed;border:1px solid #ffd6a7;border-radius:10px"></div>
<div class="a t" style="top:909.02px;font-size:11px;line-height:11px;color:#ca3500;left:157.14999999999998px;width:600px;text-align:center;letter-spacing:-0.052px;">300 Mega + 20 GB Movel</div>
<div class="a t" style="top:909.44px;font-size:10.5px;line-height:10.5px;color:#6a7282;left:537.3px;letter-spacing:0.045px;">Última mudança: há 132h</div>
<div class="a t" style="top:844.28px;font-size:22.5px;line-height:22.5px;color:#00a63e;font-weight:700;right:51.700000000000045px;letter-spacing:-0.527px;margin-right:-0.527px;">R$ 130,00</div>
<div class="a t" style="top:869.64px;font-size:10.5px;line-height:10.5px;color:#6a7282;right:51.700000000000045px;letter-spacing:-0.143px;margin-right:-0.143px;">mensal</div>
<div class="a" style="left:1744.2px;top:893.33px;width:109.7px;height:34px;background:#e1efff;border:1px solid #3b8cf5;border-radius:17px"></div>
<div class="a t" style="top:904.13px;font-size:13px;line-height:13px;color:#3b82f6;left:1499.05px;width:600px;text-align:center;-webkit-text-stroke:0.25px #3b82f6;letter-spacing:-0.337px;">Em Instalação</div>
<div class="a t" style="top:940.02px;font-size:11px;line-height:11px;color:#4b5563;right:51.700000000000045px;letter-spacing:-0.292px;margin-right:-0.292px;">#V1762824589639</div>
<div class="a" style="left:259px;top:986px;width:1617px;height:159.67px;background:#fff;border:1px solid #e6e7ec;border-radius:12px;box-shadow:0 1px 3px rgba(15,23,42,.08),0 1px 2px rgba(15,23,42,.04);border-left:3px solid #fb2c36;"></div>
<div class="a" style="left:284px;top:1012.2px;width:73.5px;height:19.7px;background:#ffe2e2;border:1px solid #ffc9c9;border-radius:10px"></div>
<svg class="a" style="left:293.45px;top:1015.75px;" width="11.5" height="11.5" viewBox="0 0 24 24" fill="none" stroke="#c10007" stroke-width="2" stroke-linecap="round" stroke-linejoin="round"><circle cx="12" cy="12" r="10"/><line x1="12" x2="12" y1="8" y2="12"/><line x1="12" x2="12.01" y1="16" y2="16"/></svg>
<div class="a t" style="top:1015.69px;font-size:11px;line-height:11px;color:#c10007;left:308.3px;letter-spacing:0.023px;">Urgente</div>
<div class="a t" style="top:1014.58px;font-size:15.5px;line-height:15.5px;color:#0f172a;left:368.6px;-webkit-text-stroke:0.35px #0f172a;letter-spacing:-0.177px;">EDUCA PRIME FORMAÇÃO PROFISSIONAL LTDA</div>
<svg class="a" style="left:284.30px;top:1047.00px;" width="14" height="14" viewBox="0 0 24 24" fill="none" stroke="#4b5563" stroke-width="2" stroke-linecap="round" stroke-linejoin="round"><path d="M15 2H6a2 2 0 0 0-2 2v16a2 2 0 0 0 2 2h12a2 2 0 0 0 2-2V7Z"/><path d="M14 2v4a2 2 0 0 0 2 2h4"/><path d="M10 9H8"/><path d="M16 13H8"/><path d="M16 17H8"/></svg>
<div class="a t" style="top:1048.62px;font-size:12.5px;line-height:12.5px;color:#4b5563;left:302.3px;letter-spacing:-0.463px;">Pessoa Jurídica</div>
<svg class="a" style="left:399.20px;top:1047.00px;" width="14" height="14" viewBox="0 0 24 24" fill="none" stroke="#4b5563" stroke-width="2" stroke-linecap="round" stroke-linejoin="round"><path d="M19 21v-2a4 4 0 0 0-4-4H9a4 4 0 0 0-4 4v2"/><circle cx="12" cy="7" r="4"/></svg>
<div class="a t" style="top:1048.62px;font-size:12.5px;line-height:12.5px;color:#4b5563;left:417.5px;letter-spacing:0.039px;">Vendedor: Admin</div>
<svg class="a" style="left:528.30px;top:1047.00px;" width="14" height="14" viewBox="0 0 24 24" fill="none" stroke="#4b5563" stroke-width="2" stroke-linecap="round" stroke-linejoin="round"><rect width="18" height="18" x="3" y="4" rx="2" ry="2"/><line x1="16" x2="16" y1="2" y2="6"/><line x1="8" x2="8" y1="2" y2="6"/><line x1="3" x2="21" y1="10" y2="10"/></svg>
<div class="a t" style="top:1048.62px;font-size:12.5px;line-height:12.5px;color:#4b5563;left:546.6px;letter-spacing:-0.056px;">22/11/2025 às 22:06</div>
<div class="a" style="left:284.5px;top:1073.5px;width:91.5px;height:19.7px;background:#eff6ff;border:1px solid #bedbff;border-radius:10px"></div>
<div class="a" style="left:385px;top:1073.5px;width:39px;height:19.7px;background:#f0fdf4;border:1px solid #b9f8cf;border-radius:10px"></div>
<div class="a" style="left:433.5px;top:1073.5px;width:67px;height:19.7px;background:#fff7ed;border:1px solid #ffd6a7;border-radius:10px"></div>
<div class="a t" style="top:1078.61px;font-size:10.5px;line-height:10.5px;color:#6a7282;left:510.5px;letter-spacing:0.045px;">Última mudança: há 132h</div>
<div class="a t" style="top:1013.95px;font-size:22.5px;line-height:22.5px;color:#00a63e;font-weight:700;right:51.700000000000045px;letter-spacing:-0.527px;margin-right:-0.527px;">R$ 100,00</div>
<div class="a t" style="top:1039.31px;font-size:10.5px;line-height:10.5px;color:#6a7282;right:51.700000000000045px;letter-spacing:-0.143px;margin-right:-0.143px;">mensal</div>
<div class="a" style="left:1769px;top:1063px;width:85px;height:34px;background:#fdeedd;border:1px solid #f0a35a;border-radius:17px"></div>
<div class="a t" style="top:1073.80px;font-size:13px;line-height:13px;color:#e8792b;left:1511.5px;width:600px;text-align:center;-webkit-text-stroke:0.25px #e8792b;letter-spacing:0.041px;">Pendente</div>
</body>
</html>
